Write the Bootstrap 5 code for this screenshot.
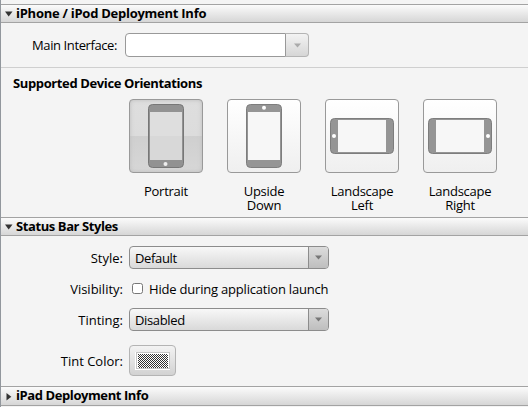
<!DOCTYPE html>
<html lang="en">
<head>
<meta charset="utf-8">
<title>Deployment Info</title>
<link href="https://cdn.jsdelivr.net/npm/bootstrap@5.3.0/dist/css/bootstrap.min.css" rel="stylesheet">
<style>
body{font:13px/14px "Open Sans","Noto Sans",sans-serif;color:#000;background:#f4f4f4;width:528px;height:407px;overflow:hidden}
button,input{letter-spacing:inherit}
.inspector{border-left:1px solid #92979d;height:407px;padding-top:4px}
.section-bar{height:19px;border-top:1px solid #a3a3a3;border-bottom:1px solid #a3a3a3;background:linear-gradient(#fbfbfb,#d6d6d6);font-size:13px;font-weight:700;padding-left:3px}
.section-bar svg{width:9px;height:9px;margin-right:3px}
.section-bar span{margin-top:-1px}
.section-bar.last{height:20px}
.section-bar.last span{margin-top:-2px}
.t-phone{letter-spacing:-.26px}
.t-sup{letter-spacing:-.38px}
.t-status,.t-ipad{letter-spacing:-.41px}
.t-hide{letter-spacing:-.2px}
.main-row{height:44px;padding-top:10px}
.field-label{text-align:right;padding-right:8px;white-space:nowrap}
.main-row .field-label{width:124px;letter-spacing:-.4px;padding-top:5px}
.rows .field-label{width:128px;padding-right:6px}
.combo{width:184px;height:24px}
.combo-input{width:161px;height:24px;border:1px solid #999;border-radius:4px 0 0 4px;background:#fff;outline:0;padding:0 5px}
.combo-btn{width:23px;height:24px;border:1px solid #b4b4b4;border-left:0;border-radius:0 4px 4px 0;background:linear-gradient(#f3f3f3,#d6d6d6);padding:0}
.orient{border-top:1px solid #cfcfcf;height:150px;padding-top:8px}
.orient h2{font-size:13px;line-height:14px;font-weight:700;margin:0 0 9px 12px}
.tiles{gap:24px;padding-left:128px}
.tile{width:74px;text-align:center;letter-spacing:-.25px}
.tile-box{width:74px;height:74px;border:1px solid #999;border-radius:4px;background:linear-gradient(#fff,#efefef);padding:0;margin-bottom:11px}
.tile-box svg{display:block;width:72px;height:72px}
.tile-box.on{background:linear-gradient(#dedede,#dcdcdc 50%,#cfcfcf 50%,#d7d7d7);box-shadow:inset 0 0 4px #bbb}
.rows{padding-top:10px;height:150px}
.picker{width:200px;height:23px;border:1px solid #8c8c8c;border-radius:4px;background:linear-gradient(#f8f8f8,#d9d9d9);padding:0 0 0 5px;overflow:hidden;letter-spacing:-.35px}
.picker-arrow{width:20px;height:21px;border-left:1px solid #8c8c8c;background:linear-gradient(#dcdcdc,#bebebe)}
.rows .form-check-input{width:11px;height:11px;margin:0 6px 0 3px;border:1px solid #777;border-radius:2.5px;background:#fff}
.swatch-btn{width:47px;height:31px;border:1px solid #b4b4b4;border-radius:4px;background:linear-gradient(#f3f3f3,#d2d2d2);padding:0}
.swatch-btn svg{display:block}
</style>
<script src="https://cdn.jsdelivr.net/npm/bootstrap@5.3.0/dist/js/bootstrap.bundle.min.js"></script>
</head>
<body>
<main class="inspector">
  <div class="section-bar d-flex align-items-center"><svg viewBox="0 0 9 9"><path d="M1 2.500h7.500L4.700 7.500z" fill="#333"/></svg><span class="t-phone">iPhone / iPod Deployment Info</span></div>
  <div class="main-row d-flex">
    <label class="field-label" for="mi">Main Interface:</label>
    <div class="combo d-flex"><input id="mi" class="combo-input"><button class="combo-btn d-flex align-items-center justify-content-center" aria-label="Open"><svg width="7" height="5"><path d="M0 .5h7L3.500 4.500z" fill="#aaa"/></svg></button></div>
  </div>
  <section class="orient">
    <h2><span class="t-sup">Supported Device Orientations</span></h2>
    <div class="tiles d-flex">
      <div class="tile"><button class="tile-box on" aria-label="Portrait"><svg viewBox="0 0 72 72"><rect x="18.500" y="4.500" width="35" height="63" rx="4" fill="#929292" stroke="#777"/><path d="M20 12h32v48H20z" fill="#dedede"/><path d="M20 36h32v24H20z" fill="#d8d8d8"/><circle cx="35.500" cy="64" r="2" fill="#eee"/></svg></button><span>Portrait</span></div>
      <div class="tile"><button class="tile-box" aria-label="Upside Down"><svg viewBox="0 0 72 72"><rect x="18.500" y="4.500" width="35" height="63" rx="4" fill="#959595" stroke="#7d7d7d"/><path d="M20 12h32v48H20z" fill="#f7f7f7"/><circle cx="36" cy="7.800" r="2" fill="#fff"/></svg></button><span>Upside<br>Down</span></div>
      <div class="tile"><button class="tile-box" aria-label="Landscape Left"><svg viewBox="0 0 72 72"><rect x="4.500" y="18.500" width="63" height="35" rx="4" fill="#959595" stroke="#7d7d7d"/><path d="M12 20h48v32H12z" fill="#f7f7f7"/><circle cx="8" cy="36" r="2" fill="#fff"/></svg></button><span>Landscape<br>Left</span></div>
      <div class="tile"><button class="tile-box" aria-label="Landscape Right"><svg viewBox="0 0 72 72"><rect x="4.500" y="18.500" width="63" height="35" rx="4" fill="#959595" stroke="#7d7d7d"/><path d="M12 20h48v32H12z" fill="#f7f7f7"/><circle cx="64" cy="36" r="2" fill="#fff"/></svg></button><span>Landscape<br>Right</span></div>
    </div>
  </section>
  <div class="section-bar d-flex align-items-center"><svg viewBox="0 0 9 9"><path d="M1 2.500h7.500L4.700 7.500z" fill="#333"/></svg><span class="t-status">Status Bar Styles</span></div>
  <section class="rows">
    <div class="d-flex align-items-center"><span class="field-label">Style:</span><button class="picker d-flex align-items-center justify-content-between"><span>Default</span><span class="picker-arrow d-flex align-items-center justify-content-center"><svg width="7" height="5"><path d="M0 .5h7L3.500 4.500z" fill="#777"/></svg></span></button></div>
    <div class="d-flex align-items-center" style="height:39px"><span class="field-label">Visibility:</span><input type="checkbox" class="form-check-input" id="hide"><label for="hide" class="t-hide">Hide during application launch</label></div>
    <div class="d-flex align-items-center"><span class="field-label">Tinting:</span><button class="picker d-flex align-items-center justify-content-between"><span>Disabled</span><span class="picker-arrow d-flex align-items-center justify-content-center"><svg width="7" height="5"><path d="M0 .5h7L3.500 4.500z" fill="#777"/></svg></span></button></div>
    <div class="d-flex align-items-center" style="margin-top:14px"><span class="field-label">Tint Color:</span><button class="swatch-btn" aria-label="Tint color"><svg width="45" height="29" shape-rendering="crispEdges"><defs><pattern id="ck" width="2" height="2" patternUnits="userSpaceOnUse"><path d="M0 0h2v2H0z" fill="#fff"/><path d="M0 0h1v1H0zM1 1h1v1H1z" fill="#333"/></pattern></defs><path d="M5 6h35v18H5z" fill="#fff"/><path d="M6.500 6.500h33v16h-33z" fill="#fff" stroke="#c4c4c4"/><path d="M8 8h30v14H8z" fill="url(#ck)"/></svg></button></div>
  </section>
  <div class="section-bar last d-flex align-items-center"><svg viewBox="0 0 9 9"><path d="M2.500 1v7.500L7.300 4.700z" fill="#333"/></svg><span class="t-ipad">iPad Deployment Info</span></div>
</main>
</body>
</html>
